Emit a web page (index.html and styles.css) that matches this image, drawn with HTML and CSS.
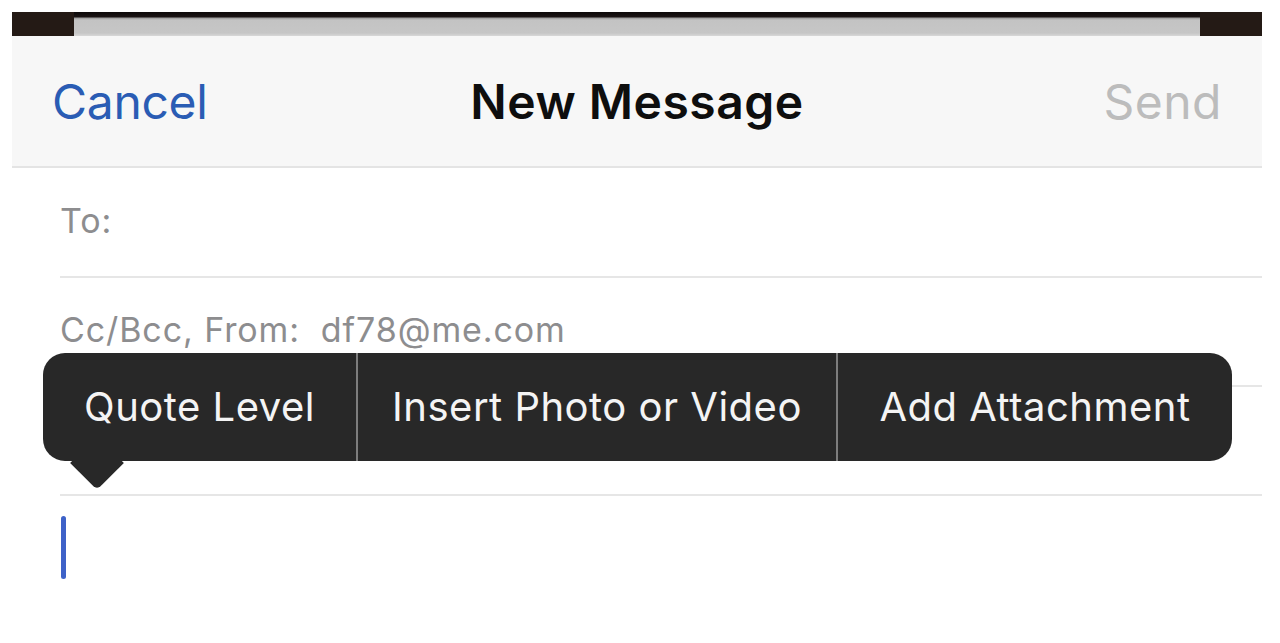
FILE: index.html
```html
<!DOCTYPE html>
<html lang="en">
<head>
<meta charset="utf-8">
<title>New Message</title>
<link rel="stylesheet" href="styles.css">
</head>
<body>
<div class="device">
  <div class="statusbar">
    <div class="cap"></div>
    <div class="track"></div>
    <div class="cap"></div>
  </div>
  <header class="nav">
    <span class="nav-btn cancel">Cancel</span>
    <span class="nav-title">New Message</span>
    <span class="nav-btn send">Send</span>
  </header>
  <div class="fields">
    <div class="row"><span class="label">To:</span></div>
    <div class="row"><span class="label">Cc/Bcc, From:&nbsp; df78@me.com</span></div>
    <div class="row"></div>
    <div class="compose"><span class="caret"></span></div>
  </div>
  <div class="menu">
    <div class="menu-arrow"></div>
    <div class="menu-bar">
      <span class="menu-item first">Quote Level</span>
      <span class="menu-item mid">Insert Photo or Video</span>
      <span class="menu-item last">Add Attachment</span>
    </div>
  </div>
</div>
</body>
</html>
```
FILE: styles.css
```css
* { box-sizing: border-box; }
html, body { margin: 0; padding: 0; background: #ffffff; }
body {
  font-family: Inter, "Liberation Sans", Arial, sans-serif;
  width: 1280px;
  height: 643px;
  overflow: hidden;
}
.device {
  position: relative;
  margin: 12px 0 0 12px;
  width: 1250px;
}
.statusbar {
  display: flex;
  height: 24px;
}
.cap {
  width: 62px;
  background: #241a15;
}
.track {
  flex: 1;
  background: linear-gradient(#0c0909 0, #1a1414 5px, #9c9c9c 6px, #c3c3c3 8px, #c6c6c6 21px, #d8d8d8 24px);
}
.nav {
  height: 132px;
  background: #f7f7f7;
  border-bottom: 2px solid #e4e4e4;
  display: flex;
  align-items: center;
  justify-content: space-between;
  padding: 0 40px 0 40px;
  position: relative;
}
.nav-btn {
  font-size: 48px;
}
.cancel { color: #2a5cb4; letter-spacing: -0.3px; }
.send { color: #bcbcbc; letter-spacing: 0.5px; }
.nav-title {
  position: absolute;
  left: 0;
  right: 0;
  text-align: center;
  font-size: 48px;
  font-weight: 600;
  letter-spacing: 0.5px;
  color: #0e0e0e;
  pointer-events: none;
}
.fields {
  margin-left: 48px;
}
.row {
  height: 109px;
  border-bottom: 2px solid #e6e6e6;
  display: flex;
  align-items: center;
  padding-bottom: 4px;
}
.row:first-child { height: 110px; }
.label {
  font-size: 34px;
  color: #8d8d8f;
  letter-spacing: 0.9px;
}
.compose {
  height: 148px;
  padding-top: 20px;
}
.caret {
  display: block;
  width: 5px;
  height: 63px;
  margin-left: 1px;
  border-radius: 3px;
  background: #3e62c8;
}
.menu {
  position: absolute;
  left: 31px;
  top: 341px;
  width: 1189px;
}
.menu-bar {
  position: relative;
  display: flex;
  height: 108px;
  background: #282828;
  border-radius: 22px;
  overflow: hidden;
}
.menu-item {
  display: flex;
  align-items: center;
  justify-content: center;
  font-size: 40px;
  color: #f4f4f4;
  letter-spacing: 0.5px;
  padding-bottom: 1px;
}
.menu-item.first { width: 313px; }
.menu-item.mid { width: 482px; border-left: 2px solid #7d7d7d; border-right: 2px solid #7d7d7d; }
.menu-item.last { flex: 1; }
.menu-arrow {
  position: absolute;
  left: 35px;
  top: 91px;
  width: 38px;
  height: 38px;
  background: #282828;
  transform: rotate(45deg);
  border-bottom-right-radius: 5px;
}
```
